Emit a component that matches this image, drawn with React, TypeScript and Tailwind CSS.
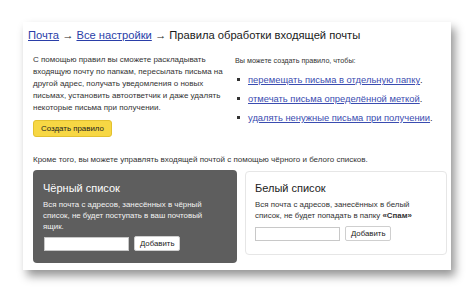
import React from 'react';

const font = { fontFamily: '"Liberation Sans", Arial, sans-serif' };

function ListBox({ dark, title, children }: { dark?: boolean; title: string; children: React.ReactNode }) {
  return (
    <div
      className={
        dark
          ? 'w-[204px] h-[93px] rounded-[4px] bg-[#5e5e5e] text-white px-[10px] pt-[11px]'
          : 'w-[202px] h-[84px] rounded-[4px] bg-white border border-[#e6e6e6] text-[#222] px-[9px] pt-[9px] mt-[1px]'
      }
    >
      <div className="text-[11px] leading-[15px]">{title}</div>
      <div className={dark ? 'w-[165px] text-[7.9px] leading-[11px] mt-[3px] text-[#f2f2f2]' : 'text-[7.9px] leading-[11px] mt-[3px] text-[#333]'}>
        {children}
      </div>
      <div className={dark ? 'flex items-center gap-[5px] mt-[4px] pl-[1px]' : 'flex items-center gap-[5px] mt-[5px]'}>
        <div className="w-[85px] h-[14px] bg-white border border-[#c8c8c8]" />
        <div className="h-[15px] px-[5px] bg-white border border-[#cfcfcf] rounded-[2px] text-[7.8px] leading-[13px] text-[#222]">
          Добавить
        </div>
      </div>
    </div>
  );
}

export default function App() {
  return (
    <div className="w-[474px] h-[293px] bg-white pl-[23px] pt-[22px]" style={font}>
      <div className="w-[428px] h-[248px] bg-white shadow-[4px_6px_9px_rgba(0,0,0,0.42)] pl-[5px] pt-[5px]">
        <div className="text-[11.2px] leading-[16px] text-[#1a1a1a]">
          <span className="text-[#2a3ea8] underline">Почта</span> → <span className="text-[#2a3ea8] underline">Все настройки</span> → Правила обработки входящей почты
        </div>
        <div className="flex mt-[11px] pl-[5px]">
          <div className="w-[200px]">
            <p className="text-[8px] leading-[12px] text-[#333]">
              С помощью правил вы сможете раскладывать входящую почту по папкам, пересылать письма на другой адрес, получать уведомления о новых письмах, установить автоответчик и даже удалять некоторые письма при получении.
            </p>
            <div className="mt-[6px] w-[79px] h-[17px] rounded-[3px] bg-[#f7d744] border border-[#e3c12f] text-[7.9px] leading-[15px] text-[#222] text-center">
              Создать правило
            </div>
          </div>
          <div className="ml-[2px]">
            <div className="text-[7.2px] leading-[12px] text-[#333] mt-[1px]">Вы можете создать правило, чтобы:</div>
            <ul className="mt-[6px] text-[9.4px] leading-[13px] flex flex-col gap-[6px]">
              {[
                'перемещать письма в отдельную папку',
                'отмечать письма определённой меткой',
                'удалять ненужные письма при получении',
              ].map((t) => (
                <li key={t} className="flex items-center">
                  <span className="w-[3px] h-[3px] bg-[#333] mr-[8px] ml-[2px]" />
                  <span className="text-[#3a4cb0] underline">{t}</span>
                  <span className="text-[#333]">.</span>
                </li>
              ))}
            </ul>
          </div>
        </div>
        <div className="mt-[17px] pl-[5px] text-[8px] leading-[12px] text-[#333]">
          Кроме того, вы можете управлять входящей почтой с помощью чёрного и белого списков.
        </div>
        <div className="flex gap-[8px] mt-[4px] pl-[5px]">
          <ListBox dark title="Чёрный список">
            Вся почта с адресов, занесённых в чёрный список, не будет поступать в ваш почтовый ящик.
          </ListBox>
          <ListBox title="Белый список">
            Вся почта с адресов, занесённых в белый список, не будет попадать в папку <b>«Спам»</b>
          </ListBox>
        </div>
      </div>
    </div>
  );
}
